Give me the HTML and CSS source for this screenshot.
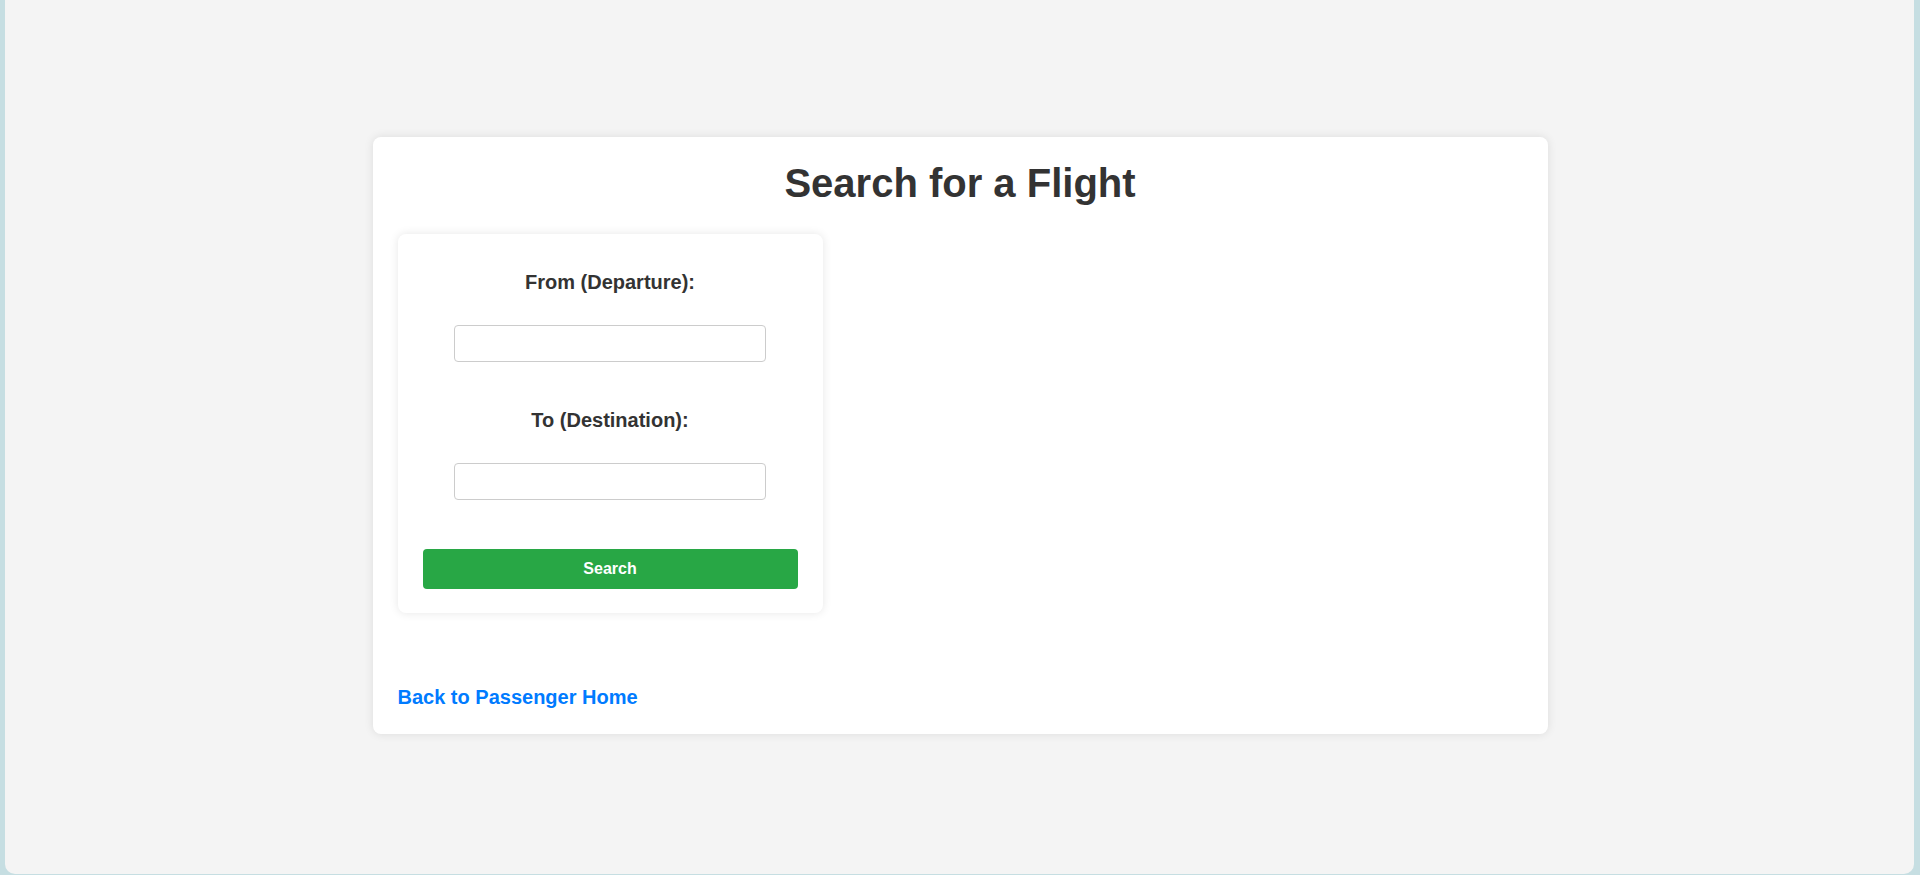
FILE: index.html
```html
<!DOCTYPE html>
<html lang="en">
<head>
<meta charset="utf-8">
<title>Search for a Flight</title>
<link rel="stylesheet" href="styles.css">
</head>
<body>
<div class="frame">
  <main class="panel">
    <section class="card">
      <h1 class="title">Search for a Flight</h1>
      <form class="search-form">
        <label class="field-label" for="from">From (Departure):</label>
        <input class="field-input" type="text" id="from" name="from">
        <label class="field-label" for="to">To (Destination):</label>
        <input class="field-input" type="text" id="to" name="to">
        <button class="search-btn" type="button">Search</button>
      </form>
      <a class="back-link" href="#">Back to Passenger Home</a>
    </section>
  </main>
</div>
</body>
</html>
```

FILE: styles.css
```css
html, body {
  margin: 0;
  padding: 0;
  background: #c6dee2;
  font-family: "Liberation Sans", Arial, sans-serif;
  color: #333;
}

.frame {
  padding: 0 6px 1px 5px;
}

.panel {
  height: 874px;
  box-sizing: border-box;
  background: #f4f4f4;
  border-radius: 0 0 10px 10px;
  padding: 137px 0 0 1px;
}

.card {
  width: 1175px;
  box-sizing: border-box;
  margin: 0 auto;
  background: #fff;
  border-radius: 8px;
  box-shadow: 0 0 10px rgba(0, 0, 0, 0.1);
  padding: 23px 25px 25px;
  display: flex;
  flex-direction: column;
  align-items: flex-start;
}

.title {
  align-self: stretch;
  margin: 0 0 28px;
  text-align: center;
  font-size: 40px;
  font-weight: bold;
  line-height: 46px;
  color: #333;
}

.search-form {
  width: 425px;
  box-sizing: border-box;
  background: #fff;
  border-radius: 8px;
  box-shadow: 0 0 10px rgba(0, 0, 0, 0.1);
  padding: 37px 25px 24px;
  display: flex;
  flex-direction: column;
  align-items: center;
}

.field-label {
  font-size: 20px;
  font-weight: bold;
  line-height: 23px;
  color: #333;
  margin: 0 0 31px;
}

.field-input {
  width: 312px;
  height: 37px;
  box-sizing: border-box;
  border: 1px solid #ccc;
  border-radius: 4px;
  padding: 8px;
  font-size: 16px;
  font-family: inherit;
  margin: 0 0 47px;
}

.field-input + .search-btn {
  margin-top: 2px;
}

.search-btn {
  align-self: stretch;
  height: 40px;
  border: none;
  border-radius: 4px;
  background: #28a745;
  color: #fff;
  font-family: inherit;
  font-size: 16px;
  font-weight: bold;
  cursor: pointer;
}

.back-link {
  margin-top: 73px;
  font-size: 20px;
  font-weight: bold;
  line-height: 23px;
  color: #007bff;
  text-decoration: none;
}
```
